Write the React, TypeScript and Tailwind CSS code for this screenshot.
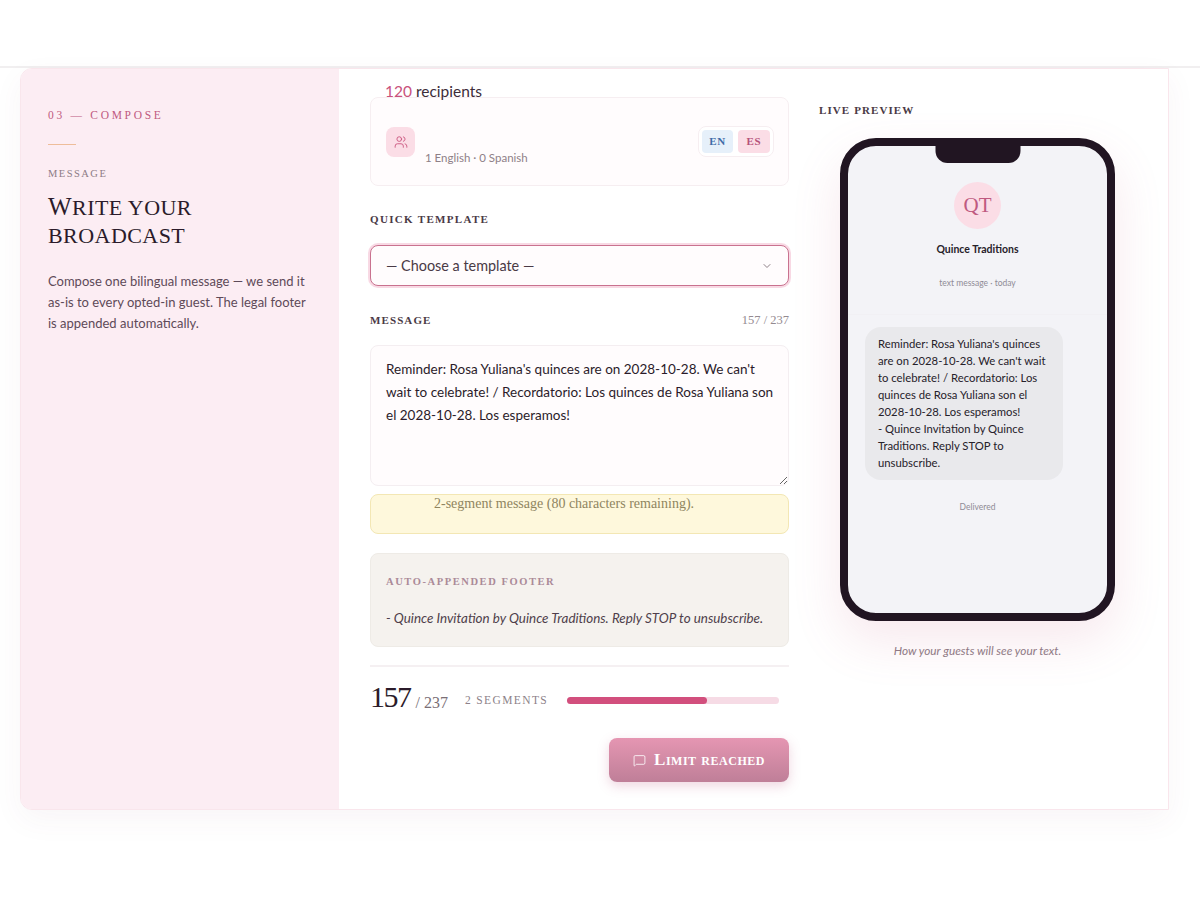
import { Users, ChevronDown, MessageSquare } from 'lucide-react';

const serif = "font-['Liberation_Serif',serif]";
const body = "font-['Lato','Liberation_Sans',sans-serif]";

export default function App() {
  return (
    <div className={`min-h-[900px] bg-white ${body} text-[#2b1b2a]`}>
      {/* Top bar */}
      <div className="h-[68px] border-b-2 border-[#f1eff0] bg-white" />

      <div className="px-5">
        <div className="flex h-[742px] w-[1149px] overflow-hidden rounded-l-xl border border-[#f9e6ec] bg-white shadow-[0_10px_30px_rgba(120,60,90,0.05)]">
          {/* Left panel */}
          <aside className="w-[318px] shrink-0 bg-[#fcedf3] pl-[27px] pr-6 pt-[39px]">
            <p className={`${serif} text-[11.5px] leading-[14px] tracking-[0.235em] text-[#bf5a80]`}>03 — COMPOSE</p>
            <div className="mt-[22px] h-px w-7 bg-[#eebd9a]" />
            <p className={`${serif} mt-[22px] text-[10.5px] leading-[14px] tracking-[0.14em] text-[#8d7b85]`}>MESSAGE</p>
            <h1 className={`${serif} mt-[12px] text-[22px] uppercase leading-[28px] tracking-[0.02em] text-[#2b1b2a]`}>
              <span className="text-[25px]">W</span>rite your
              <br />
              broadcast
            </h1>
            <p className="mt-[21px] w-[266px] text-[13px] leading-[21px] text-[#5e4a58]">
              Compose one bilingual message — we send it as-is to every opted-in guest. The legal footer is appended automatically.
            </p>
          </aside>

          {/* Compose column */}
          <main className="ml-[31px] w-[419px] shrink-0">
            <div className="relative mt-[28px] flex h-[89px] items-center justify-between rounded-lg border border-[#f6eef1] bg-[#fffcfd] pl-[15px] pr-[14px]">
              <p className="absolute -top-[17px] left-[14px] text-[15.5px] leading-5 text-[#3d2c39]">
                <span className="text-[#c9517c]">120</span> recipients
              </p>
              <div className="flex items-start gap-[10px] pt-[9px]">
                <div className="flex h-[30px] w-[29px] items-center justify-center rounded-lg bg-[#fbdde6]">
                  <Users className="h-[14px] w-[14px] text-[#c9517c]" strokeWidth={1.5} />
                </div>
                <p className="mt-[24px] text-[11.5px] leading-[14px] text-[#8e8087]">1 English · 0 Spanish</p>
              </div>
              <div className="flex gap-[5px] rounded-lg border border-[#f6eef1] bg-white p-[3px]">
                <span className={`${serif} flex h-[23px] w-[31px] items-center justify-center rounded bg-[#e6f0fa] text-[11px] font-bold tracking-[0.06em] text-[#3f6ca8]`}>EN</span>
                <span className={`${serif} flex h-[23px] w-[32px] items-center justify-center rounded bg-[#fbdde6] text-[11px] font-bold tracking-[0.06em] text-[#b5527a]`}>ES</span>
              </div>
            </div>

            <p className={`${serif} mt-[26px] text-[11px] font-bold leading-[14px] tracking-[0.12em] text-[#4a3a46]`}>QUICK TEMPLATE</p>

            <div className="mt-[19px] flex h-[41px] items-center justify-between rounded-lg border border-[#c9728f] bg-[#fffcfd] pl-[15px] pr-[15px] shadow-[0_0_0_2px_rgba(240,170,195,0.45)]">
              <span className="text-[14.4px] text-[#4a3a46]">— Choose a template —</span>
              <ChevronDown className="h-[12px] w-[12px] text-[#8e8087]" />
            </div>

            <div className="mt-[27px] flex items-center justify-between">
              <p className={`${serif} text-[11px] font-bold leading-[14px] tracking-[0.1em] text-[#4a3a46]`}>MESSAGE</p>
              <p className={`${serif} text-[12.5px] leading-[14px] text-[#948a90]`}>157 / 237</p>
            </div>

            <textarea
              readOnly
              defaultValue="Reminder: Rosa Yuliana's quinces are on 2028-10-28. We can't wait to celebrate! / Recordatorio: Los quinces de Rosa Yuliana son el 2028-10-28. Los esperamos!"
              className="mt-[18px] block h-[141px] w-full rounded-lg border border-[#f4eef1] bg-[#fffcfd] py-[12px] pl-[15px] pr-[10px] text-[13.5px] leading-[23px] text-[#2b1b2a] outline-none"
            />

            <div className={`${serif} mt-[8px] h-[40px] rounded-lg border border-[#f3e7b4] bg-[#fef8dc] pl-[63px] text-[14px] leading-[18px] text-[#8f8560]`}>
              2-segment message (80 characters remaining).
            </div>

            <div className="mt-[19px] h-[94px] rounded-lg border border-[#eeebe6] bg-[#f5f2ee] px-[15px] pt-[21px]">
              <p className={`${serif} text-[10.5px] font-bold leading-[14px] tracking-[0.15em] text-[#ab8a98]`}>AUTO-APPENDED FOOTER</p>
              <p className="mt-[20px] text-[13.4px] italic leading-[18px] text-[#4f3f4b]">- Quince Invitation by Quince Traditions. Reply STOP to unsubscribe.</p>
            </div>

            <div className="mt-[18px] flex h-[65px] items-center border-t-2 border-[#f5f0f2] pt-[4px]">
              <span className={`${serif} mb-[8px] text-[30px] leading-none tracking-[-0.05em] text-[#2b1b2a]`}>157</span>
              <span className={`${serif} ml-[5px] mt-[5px] text-[16px] leading-none text-[#7a6f76]`}>/ 237</span>
              <span className={`${serif} ml-[17px] text-[11.5px] leading-none tracking-[0.12em] text-[#8d8289]`}>2 SEGMENTS</span>
              <div className="ml-[19px] h-[7px] w-[212px] rounded-full bg-[#f6dbe5]">
                <div className="h-full w-[66%] rounded-full bg-[#d24f7d]" />
              </div>
            </div>

            <div className="mt-[8px] flex justify-end">
              <button className={`${serif} flex h-[44px] w-[180px] items-center justify-center gap-2 rounded-lg bg-gradient-to-b from-[#e596b2] to-[#bf7f98] text-[17px] font-bold tracking-[0.03em] text-white shadow-[0_4px_12px_rgba(190,90,130,0.25)] [font-variant:small-caps]`}>
                <MessageSquare className="h-[13px] w-[13px]" strokeWidth={1.5} />
                Limit reached
              </button>
            </div>
          </main>

          {/* Preview column */}
          <section className="ml-[30px] w-[320px] shrink-0 pt-[34px]">
            <p className={`${serif} text-[11px] font-bold leading-[14px] tracking-[0.1em] text-[#4a3a46]`}>LIVE PREVIEW</p>
            <div className="relative ml-[21px] mt-[21px] h-[483px] w-[275px] rounded-[36px] border-[8px] border-[#211522] bg-[#f3f3f7] shadow-[0_20px_50px_rgba(200,90,130,0.14)]">
              <div className="absolute left-1/2 -top-[1px] h-[18px] w-[85px] -translate-x-1/2 rounded-b-xl bg-[#211522]" />
              <div className="flex h-[169px] flex-col items-center border-b border-[#f1f0f4] pt-[36px]">
                <div className="flex h-[47px] w-[47px] items-center justify-center rounded-full bg-[#fbdde6]">
                  <span className={`${serif} text-[21px] leading-none text-[#bf5a80]`}>QT</span>
                </div>
                <p className="mt-[13px] text-[10.5px] font-bold leading-[14px] text-[#26212a]">Quince Traditions</p>
                <p className="mt-[21px] text-[8.5px] leading-[12px] text-[#8f8b96]">text message · today</p>
              </div>
              <div className="ml-[17px] mt-[12px] h-[153px] w-[198px] rounded-2xl bg-[#e9e9ec] px-[13px] pt-[8px] text-[11.3px] leading-[17px] text-[#26212a]">
                Reminder: Rosa Yuliana's quinces are on 2028-10-28. We can't wait to celebrate! / Recordatorio: Los quinces de Rosa Yuliana son el 2028-10-28. Los esperamos!
                <br />- Quince Invitation by Quince Traditions. Reply STOP to unsubscribe.
              </div>
              <p className="mt-[21px] text-center text-[8.5px] leading-[12px] text-[#8f8b96]">Delivered</p>
            </div>
            <p className="ml-[21px] mt-[22px] w-[275px] text-center text-[11.8px] italic leading-4 text-[#8d7b85]">How your guests will see your text.</p>
          </section>
        </div>
      </div>
    </div>
  );
}
